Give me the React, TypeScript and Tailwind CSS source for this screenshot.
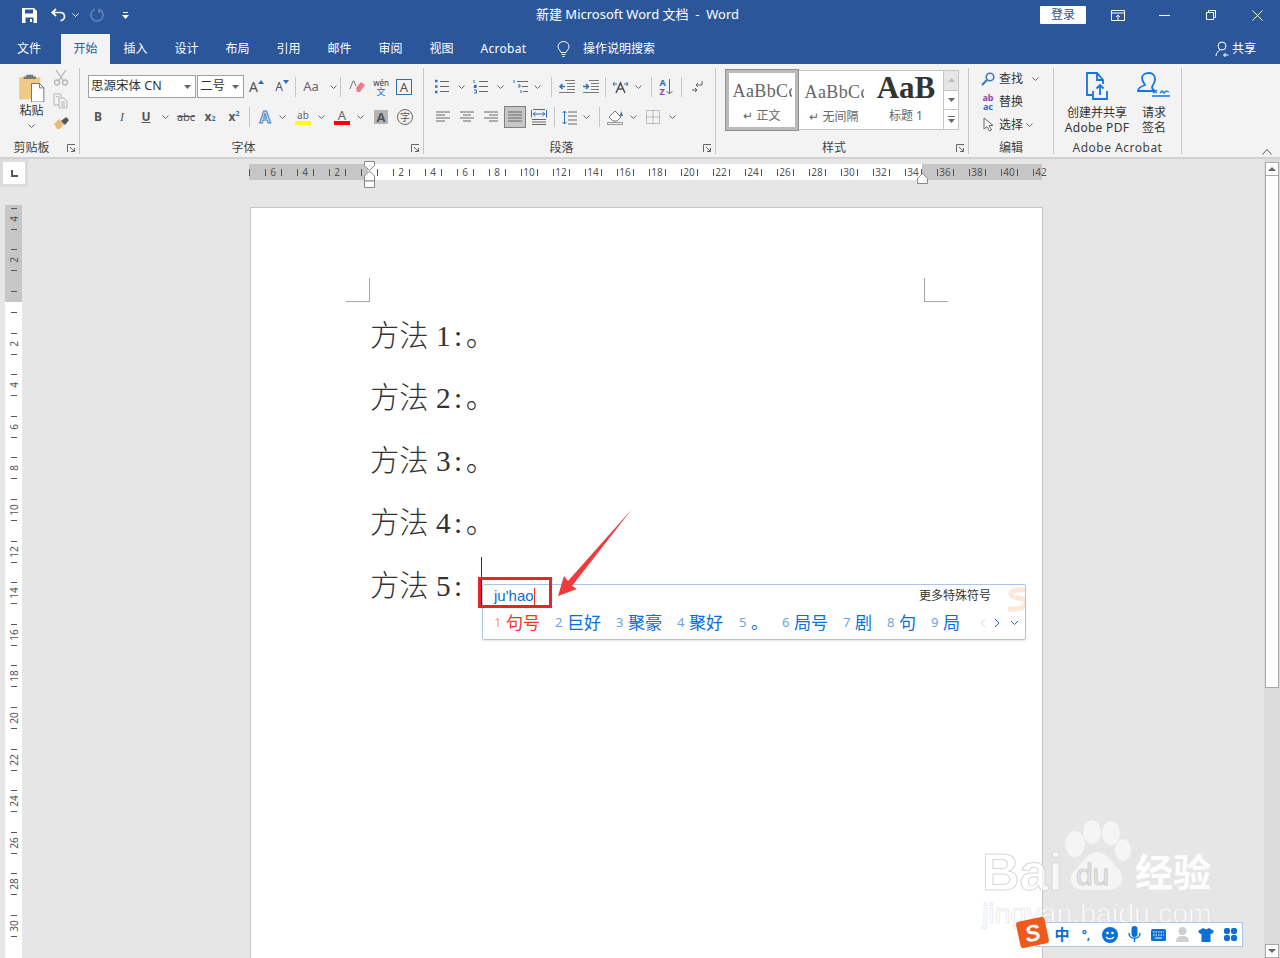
import type { ReactNode } from 'react'

const hRuler = [6, 4, 2, '', 2, 4, 6, 8, 10, 12, 14, 16, 18, 20, 22, 24, 26, 28, 30, 32, 34, 36, 38, 40, 42]
const vRuler = [4, 2, '', 2, 4, 6, 8, 10, 12, 14, 16, 18, 20, 22, 24, 26, 28, 30]
const tabs = ['插入', '设计', '布局', '引用', '邮件', '审阅', '视图']
const docLines = [
  { n: '1:', end: '。' },
  { n: '2:', end: '。' },
  { n: '3:', end: '。' },
  { n: '4:', end: '。' },
  { n: '5:', end: '' },
]
const candidates = [
  { n: '2', t: '巨好', w: 'w-[61px]' },
  { n: '3', t: '聚豪', w: 'w-[61px]' },
  { n: '4', t: '聚好', w: 'w-[62px]' },
  { n: '5', t: '。', w: 'w-[43px]' },
  { n: '6', t: '局号', w: 'w-[61px]' },
  { n: '7', t: '剧', w: 'w-[44px]' },
  { n: '8', t: '句', w: 'w-[44px]' },
  { n: '9', t: '局', w: 'w-[42px]' },
]

function Cell({ className = '', children }: { className?: string; children?: ReactNode }) {
  return <div className={`flex items-center justify-center h-[22px] shrink-0 ${className}`}>{children}</div>
}

function Chev({ className = '' }: { className?: string }) {
  return (
    <svg width="7" height="4" viewBox="0 0 7 4" className={`shrink-0 ${className}`} fill="none" stroke="#666">
      <path d="M.5.5l3 3 3-3" />
    </svg>
  )
}

function ChevCell({ className = '' }: { className?: string }) {
  return <Cell className={className}><Chev /></Cell>
}

function Sep({ className = '' }: { className?: string }) {
  return <div className={`w-px h-[20px] bg-[#c6c6c6] shrink-0 ${className}`} />
}

function Launcher() {
  return (
    <div className="w-[16px] flex justify-center items-center shrink-0">
      <svg width="9" height="9" viewBox="0 0 9 9" fill="none" stroke="#666">
        <path d="M.5 8V.5H8M3 3l4.500 4.500M7.500 4v3.500H4" />
      </svg>
    </div>
  )
}

function Group({ label, launcher, className = '', labelClass = '', children }: { label: string; launcher?: boolean; className?: string; labelClass?: string; children: ReactNode }) {
  return (
    <div className={`h-[86px] border-r border-[#c6c6c6] flex flex-col shrink-0 ${className}`}>
      <div className="flex-1 min-h-0">{children}</div>
      <div className="flex h-[16px] -mb-[2px]">
        <div className={`flex-1 text-center text-[12px] leading-[16px] text-[#444] ${labelClass}`}>{label}</div>
        {launcher && <Launcher />}
      </div>
    </div>
  )
}

function AlignIcon({ d }: { d: string }) {
  return (
    <svg width="16" height="12" viewBox="0 0 16 12" fill="none" stroke="#666">
      <path d={d} />
    </svg>
  )
}

function ListIcon({ kind }: { kind: 'dot' | 'num' | 'multi' }) {
  return (
    <svg width="16" height="15" viewBox="0 0 16 15" fill="none">
      {kind === 'dot' && <path d="M1 2h3M1 7.500h3M1 13h3" stroke="#2f6fb5" strokeWidth="2.500" strokeDasharray="2.500 40" />}
      {kind === 'num' && <path d="M1 1v3M1 6.500h2.500v1H1v1h2.500M1 11h2.500v3H1" stroke="#2f6fb5" />}
      {kind === 'multi' && <path d="M1 1v3M5 6h2v2H5M8 11v3" stroke="#2f6fb5" />}
      {kind === 'multi' ? <path d="M4 2.500h11M9 7.500h6M10 12.500h5" stroke="#666" /> : <path d="M6 2.500h9M6 7.500h9M6 12.500h9" stroke="#666" />}
    </svg>
  )
}

function Clipboard() {
  return (
    <div className="flex">
      <div className="w-[63px] shrink-0 flex flex-col items-center pt-[4px]">
        <svg width="29" height="30" viewBox="0 0 30 34">
          <path d="M1 6h24v25H1z" fill="#f0c987" />
          <path d="M9 3h8v2h3v3H6V5h3z" fill="#777" />
          <path d="M15 13h9l5 5v16H15z" fill="#fff" stroke="#666" />
          <path d="M24 13v5h5" fill="none" stroke="#666" />
        </svg>
        <div className="text-[12px] leading-[16px] mt-px text-[#333]">粘贴</div>
        <Chev className="mt-[5px]" />
      </div>
    </div>
  )
}

function ClipActions() {
  return (
    <div className="flex flex-col items-center w-[16px] -ml-[10px] pt-px gap-[7px]">
      <svg width="16" height="17" viewBox="0 0 16 17" fill="none" stroke="#b5b5b5" strokeWidth="1.300">
        <path d="M3 1l7 10M13 1L6 11" />
        <circle cx="4" cy="13.500" r="2.500" />
        <circle cx="12" cy="13.500" r="2.500" />
      </svg>
      <svg width="16" height="16" viewBox="0 0 16 16" fill="#f3f3f3" stroke="#b5b5b5">
        <path d="M1 1h7v11H1z" />
        <path d="M6 5h5l3 3v7H6zM3 3.500h3M8 9h4M8 11h4M8 13h4" />
      </svg>
      <svg width="17" height="15" viewBox="0 0 17 15">
        <path d="M1 8l5-5 5 5-4 5H4z" fill="#e9bd78" />
        <path d="M8 5l5-4 3 3-4 5z" fill="#555" />
      </svg>
    </div>
  )
}

function FontGroup() {
  return (
    <div className="pt-[7px]">
      <div className="flex items-center h-[23px] pl-[8px]">
        <div className="w-[108px] h-[23px] bg-white border border-[#a0a0a0] flex items-center justify-between px-[2px] text-[12.500px] text-[#333]">
          <span>思源宋体 CN</span>
          <svg width="7" height="4" viewBox="0 0 7 4" className="mr-[2px]"><path d="M0 0h7L3.500 4z" fill="#666" /></svg>
        </div>
        <div className="w-[47px] ml-px h-[23px] bg-white border border-[#a0a0a0] flex items-center justify-between px-[2px] text-[12.500px] text-[#333]">
          <span>二号</span>
          <svg width="7" height="4" viewBox="0 0 7 4" className="mr-[2px]"><path d="M0 0h7L3.500 4z" fill="#666" /></svg>
        </div>
        <Cell className="w-[25px] text-[14px] text-[#555]"><span>A</span><svg width="6" height="4" viewBox="0 0 6 4" className="-mt-[10px]"><path d="M0 4l3-4 3 4z" fill="#2f6fb5" /></svg></Cell>
        <Cell className="w-[26px] text-[12px] text-[#555]"><span>A</span><svg width="6" height="4" viewBox="0 0 6 4" className="-mt-[10px]"><path d="M0 0l3 4 3-4z" fill="#2f6fb5" /></svg></Cell>
        <Sep />
        <Cell className="w-[30px] text-[13px] text-[#666]">Aa</Cell>
        <ChevCell className="w-[14px]" />
        <Sep />
        <Cell className="w-[32px]">
          <svg width="16" height="16" viewBox="0 0 16 16">
            <path d="M7 9l5-6 4 3-5 7H8z" fill="#ee7b8a" />
            <path d="M1 10l3-8h1l2 5" fill="none" stroke="#777" />
          </svg>
        </Cell>
        <Cell className="w-[16px] flex-col leading-[9px]">
          <span className="text-[8px] text-[#333]">wén</span>
          <span className="text-[9px] text-[#2f6fb5]">文</span>
        </Cell>
        <Cell className="w-[30px]">
          <div className="w-[16px] h-[16px] border border-[#2f6fb5] text-[13px] leading-[14px] text-center text-[#555]">A</div>
        </Cell>
      </div>
      <div className="flex items-center h-[22px] mt-[8px] pl-[6px] text-[#555]">
        <Cell className="w-[24px] text-[12px] font-bold">B</Cell>
        <Cell className="w-[24px] text-[12px] italic font-['Liberation_Serif',serif]">I</Cell>
        <Cell className="w-[24px] text-[12px] font-bold underline">U</Cell>
        <ChevCell className="w-[14px]" />
        <Cell className="w-[28px] text-[11px] line-through">abc</Cell>
        <Cell className="w-[20px] text-[12px] font-bold">x<sub className="text-[7px] text-[#2f6fb5]">2</sub></Cell>
        <Cell className="w-[28px] text-[12px] font-bold">x<sup className="text-[7px] text-[#2f6fb5]">2</sup></Cell>
        <Sep className="ml-px" />
        <Cell className="w-[26px] ml-[2px] text-[16px] font-bold text-[#cfe0f3] [-webkit-text-stroke:1px_#4a86c5]">A</Cell>
        <ChevCell className="w-[8px]" />
        <Cell className="w-[30px] ml-[2px]">
          <div className="flex flex-col items-center leading-[10px]">
            <span className="text-[10px] text-[#666]">ab</span>
            <div className="w-[16px] h-[4px] bg-[#ffff00] mt-[1px]" />
          </div>
        </Cell>
        <ChevCell className="w-[6px]" />
        <Cell className="w-[32px] ml-[2px]">
          <div className="flex flex-col items-center leading-[11px]">
            <span className="text-[13px] text-[#666]">A</span>
            <div className="w-[16px] h-[4px] bg-[#ff0000]" />
          </div>
        </Cell>
        <ChevCell className="w-[4px]" />
        <Cell className="w-[30px] ml-[4px]">
          <div className="w-[14px] h-[14px] bg-[#b5b5b5] text-[13px] leading-[14px] text-center font-bold text-[#555]">A</div>
        </Cell>
        <Cell className="w-[18px]">
          <div className="w-[16px] h-[16px] rounded-full border border-[#666] text-[10px] leading-[14px] text-center text-[#555]">字</div>
        </Cell>
      </div>
    </div>
  )
}

function ParagraphGroup() {
  return (
    <div className="pt-[7px]">
      <div className="flex items-center h-[23px] pl-[8px]">
        <Cell className="w-[20px]"><ListIcon kind="dot" /></Cell>
        <ChevCell className="w-[18px]" />
        <Cell className="w-[22px]"><ListIcon kind="num" /></Cell>
        <ChevCell className="w-[16px]" />
        <Cell className="w-[26px]"><ListIcon kind="multi" /></Cell>
        <ChevCell className="w-[6px]" />
        <Sep className="ml-[11px]" />
        <Cell className="w-[28px]">
          <svg width="17" height="13" viewBox="0 0 17 13" fill="none">
            <path d="M7 .5h10M9 3.500h8M9 6.500h8M9 9.500h8M1 12.500h16" stroke="#777" />
            <path d="M7 6.500H2M4.500 4L2 6.500 4.500 9" stroke="#2f6fb5" strokeWidth="1.500" />
          </svg>
        </Cell>
        <Cell className="w-[20px]">
          <svg width="17" height="13" viewBox="0 0 17 13" fill="none">
            <path d="M7 .5h10M9 3.500h8M9 6.500h8M9 9.500h8M1 12.500h16" stroke="#777" />
            <path d="M1 6.500h5M4 4l2.500 2.500L4 9" stroke="#2f6fb5" strokeWidth="1.500" />
          </svg>
        </Cell>
        <Sep className="ml-[5px]" />
        <Cell className="w-[28px]">
          <svg width="17" height="14" viewBox="0 0 17 14" fill="none">
            <path d="M4 13l4.500-10L13 13M6 9h5" stroke="#555" strokeWidth="1.600" />
            <path d="M1 4h4M2.500 2L1 4l1.500 2M12 4h4M14.500 2L16 4l-1.500 2" stroke="#2f6fb5" />
          </svg>
        </Cell>
        <ChevCell className="w-[8px]" />
        <Sep className="ml-[9px]" />
        <Cell className="w-[28px]">
          <div className="flex items-center">
            <div className="flex flex-col text-[9px] leading-[9px] font-bold">
              <span className="text-[#2f6fb5]">A</span>
              <span className="text-[#8e44ad]">Z</span>
            </div>
            <svg width="7" height="16" viewBox="0 0 7 16" fill="none" stroke="#666"><path d="M3.500 0v15M.5 12l3 3 3-3" /></svg>
          </div>
        </Cell>
        <Sep className="ml-px" />
        <Cell className="w-[30px]">
          <svg width="12" height="14" viewBox="0 0 12 14" fill="none" stroke="#666">
            <path d="M11 1v4H5M7 3L5 5l2 2" />
            <path d="M1 10h5M4 8l2 2-2 2" stroke="#555" />
          </svg>
        </Cell>
      </div>
      <div className="flex items-center h-[22px] mt-[8px] pl-[7px]">
        <Cell className="w-[24px]"><AlignIcon d="M1 1h14M1 4h9M1 7h14M1 10h9" /></Cell>
        <Cell className="w-[24px]"><AlignIcon d="M1 1h14M4 4h8M1 7h14M4 10h8" /></Cell>
        <Cell className="w-[24px]"><AlignIcon d="M1 1h14M6 4h9M1 7h14M6 10h9" /></Cell>
        <Cell className="w-[24px]">
          <div className="w-[22px] h-[22px] bg-[#c6c6c6] border border-[#7f7f7f] flex items-center justify-center">
            <AlignIcon d="M1 1h14M1 4h14M1 7h14M1 10h14" />
          </div>
        </Cell>
        <Cell className="w-[24px]">
          <svg width="16" height="16" viewBox="0 0 16 16" fill="none">
            <path d="M2 .5h12M1 10.500h14M1 13h14M1 15.500h14" stroke="#666" />
            <path d="M.5 1v7.500M15.500 1v7.500M2 5h12M4.500 3L2 5l2.500 2M11.500 3L14 5l-2.500 2" stroke="#2f6fb5" />
          </svg>
        </Cell>
        <Sep className="ml-[3px]" />
        <Cell className="w-[28px]">
          <svg width="15" height="15" viewBox="0 0 15 15" fill="none">
            <path d="M6 2h9M6 6h9M6 10h9M6 14h9" stroke="#666" />
            <path d="M2.500 1v13M.5 3l2-2 2 2M.5 12l2 2 2-2" stroke="#2f6fb5" />
          </svg>
        </Cell>
        <ChevCell className="w-[6px]" />
        <Sep className="ml-[10px]" />
        <Cell className="w-[30px]">
          <svg width="17" height="16" viewBox="0 0 17 16" fill="none">
            <path d="M2 8l6-6 6 6-4 4H6z" fill="#fff" stroke="#777" />
            <path d="M14 2l2 5h-3z" fill="#2f6fb5" />
            <path d="M.5 13.500h15v2H.5z" stroke="#999" />
          </svg>
        </Cell>
        <ChevCell className="w-[6px]" />
        <Cell className="w-[30px] ml-[2px]">
          <svg width="14" height="14" viewBox="0 0 14 14" fill="none" stroke="#888" strokeDasharray="1 1">
            <path d="M.5.500h13v13H.5zM7 .5v13M.5 7h13" />
          </svg>
        </Cell>
        <ChevCell className="w-[8px]" />
      </div>
    </div>
  )
}

function StyleItem({ sample, label, selected, big }: { sample: string; label: string; selected?: boolean; big?: boolean }) {
  return (
    <div className={`w-[72px] shrink-0 flex flex-col items-center ${selected ? 'border-[3px] border-[#b9b9b9] outline outline-1 outline-[#8f8f8f] -my-px' : ''}`}>
      {big ? (
        <div className="mt-[5px] font-['Liberation_Serif',serif] whitespace-nowrap text-[31px] font-bold leading-[24px] text-[#333]">{sample}</div>
      ) : (
        <div className={`w-[59px] overflow-hidden font-['Liberation_Serif',serif] whitespace-nowrap text-[18px] leading-[24px] tracking-[0.4px] text-[#666] ${selected ? 'mt-[6px]' : 'mt-[9px]'}`}>{sample}</div>
      )}
      <div className={`text-[12px] text-[#666] ${big ? 'mt-[7px]' : 'mt-[4px]'}`}>{label}</div>
    </div>
  )
}

function StylesGroup() {
  return (
    <div className="pt-[2px] pl-[9px]">
      <div className="w-[234px] h-[60px] bg-white border border-[#c6c6c6] flex">
        <StyleItem sample="AaBbCc" label="↵ 正文" selected />
        <StyleItem sample="AaBbCc" label="↵ 无间隔" />
        <StyleItem sample="AaB" label="标题 1" big />
        <div className="w-[15px] shrink-0 ml-auto border-l border-[#c6c6c6] flex flex-col">
          <div className="flex-1 bg-[#e6e6e6] flex items-center justify-center border-b border-[#c6c6c6]">
            <svg width="7" height="4" viewBox="0 0 7 4"><path d="M0 4l3.500-4L7 4z" fill="#bbb" /></svg>
          </div>
          <div className="flex-1 flex items-center justify-center border-b border-[#c6c6c6]">
            <svg width="7" height="4" viewBox="0 0 7 4"><path d="M0 0l3.500 4L7 0z" fill="#666" /></svg>
          </div>
          <div className="flex-1 flex items-center justify-center">
            <svg width="7" height="7" viewBox="0 0 7 7"><path d="M0 0h7v1H0zM0 3l3.500 4L7 3z" fill="#666" /></svg>
          </div>
        </div>
      </div>
    </div>
  )
}

function EditRow({ icon, label, chev }: { icon: ReactNode; label: string; chev?: string }) {
  return (
    <div className="flex items-center h-[23px] pl-[10px] text-[12px] text-[#333]">
      <div className="w-[18px] flex justify-center shrink-0">{icon}</div>
      <span className="ml-[2px]">{label}</span>
      {chev && <Chev className={chev} />}
    </div>
  )
}

function EditingGroup() {
  return (
    <div className="-mt-px">
      <EditRow
        label="查找"
        chev="ml-[9px]"
        icon={
          <svg width="14" height="14" viewBox="0 0 14 14" fill="none" stroke="#3e78b8" strokeWidth="1.600">
            <circle cx="9" cy="5" r="3.800" />
            <path d="M6 8l-5 5" strokeWidth="2.200" />
          </svg>
        }
      />
      <EditRow
        label="替换"
        icon={
          <div className="text-[9px] leading-[9px] font-bold text-center">
            <div className="text-[#8e44ad]">ab</div>
            <div className="text-[#2f6fb5]">ac</div>
          </div>
        }
      />
      <EditRow
        label="选择"
        chev="ml-[3px]"
        icon={
          <svg width="11" height="15" viewBox="0 0 11 15" fill="#fff" stroke="#666">
            <path d="M1 1v11l3-2.500L6.500 14l2-1L6 8.500h4z" />
          </svg>
        }
      />
    </div>
  )
}

function AcrobatGroup() {
  return (
    <div className="flex pl-[10px] pt-[3px]">
      <div className="w-[66px] flex flex-col items-center shrink-0">
        <svg width="26" height="30" viewBox="0 0 26 30" fill="none" stroke="#1473e6" strokeWidth="1.800">
          <path d="M8 24H3V2h10l6 7v4M13 2v7h6" />
          <path d="M9 20v8h14v-8M16 24V14M12.500 17.500L16 14l3.500 3.500" />
        </svg>
        <div className="text-[12px] leading-[15px] mt-[4px] text-center text-[#333] whitespace-nowrap">创建并共享<br /><span className="tracking-[0.3px]">Adobe PDF</span></div>
      </div>
      <div className="w-[42px] ml-[3px] flex flex-col items-center shrink-0">
        <svg width="34" height="30" viewBox="0 0 34 30" fill="none" stroke="#1473e6" strokeWidth="1.800">
          <path d="M12 2c4 0 6 3 6 6 0 4-2 6-3 8 0 2 1 3 3 4H1c0-3 4-5 7-6-1-2-3-4-3-7 0-3 3-5 7-5z" />
          <path d="M15 25h18M16 19l4 3M20 19l-4 3M23 22l2-2 2 2 2-2 3 1" strokeWidth="1.300" />
        </svg>
        <div className="text-[12px] leading-[15px] mt-[4px] text-center text-[#333]">请求<br />签名</div>
      </div>
    </div>
  )
}

function TitleBar() {
  return (
    <div className="h-[30px] flex items-center text-white relative shrink-0">
      <div className="flex items-center pl-[22px]">
        <svg width="15" height="15" viewBox="0 0 15 15" className="shrink-0">
          <path d="M0 0h12l3 3v12H0z" fill="#fff" />
          <path d="M3 1.500h8v4H3zM3.500 9.500h8V15h-8z" fill="#2b579a" />
          <path d="M8 11h2v3H8z" fill="#fff" />
        </svg>
        <svg width="15" height="14" viewBox="0 0 15 14" fill="none" stroke="#fff" strokeWidth="1.700" className="ml-[14px] shrink-0">
          <path d="M5 1L1.200 4.500 5 8M1.500 4.500H9c3 0 4.500 2 4.500 4s-1.500 4-4 4" />
        </svg>
        <Chev className="ml-[6px] [&>path]:stroke-white" />
        <svg width="14" height="14" viewBox="0 0 14 14" fill="none" stroke="#5f82b8" strokeWidth="1.700" className="ml-[11px] shrink-0">
          <path d="M9 1.500c3 1 4 3.500 4 5.500a6 6 0 1 1-8-5.700M9 .8V5" />
        </svg>
        <svg width="7" height="7" viewBox="0 0 7 7" className="ml-[18px] shrink-0"><path d="M1 0h5v1H1zM0 3h7L3.500 7z" fill="#fff" /></svg>
      </div>
      <div className="flex-1 text-center text-[13px] whitespace-pre pl-[106px]">新建 Microsoft Word 文档  -  Word</div>
      <div className="flex items-center">
        <div className="w-[46px] h-[18px] bg-white rounded-[1px] text-center text-[12px] leading-[18px] text-[#2b579a]">登录</div>
        <div className="w-[46px] flex justify-center ml-[9px]">
          <svg width="14" height="11" viewBox="0 0 14 11" fill="none" stroke="#fff"><path d="M.5.500h13v10H.5zM.5 3h13M5 7l2-2 2 2M7 5v5" /></svg>
        </div>
        <div className="w-[47px] flex justify-center">
          <svg width="11" height="1" viewBox="0 0 11 1"><path d="M0 0h11v1H0z" fill="#fff" /></svg>
        </div>
        <div className="w-[46px] flex justify-center">
          <svg width="10" height="10" viewBox="0 0 10 10" fill="none" stroke="#fff"><path d="M.5 2.500h7v7h-7zM2.500 2.500v-2h7v7h-2" /></svg>
        </div>
        <div className="w-[46px] flex justify-center">
          <svg width="11" height="11" viewBox="0 0 11 11" fill="none" stroke="#fff"><path d="M.5.500l10 10M10.500.5l-10 10" /></svg>
        </div>
      </div>
    </div>
  )
}

function TabRow() {
  return (
    <div className="h-[34px] flex items-end text-[12px] text-white shrink-0 pl-[4px]">
      <div className="w-[50px] h-[30px] leading-[30px] text-center">文件</div>
      <div className="w-[49px] ml-[7px] h-[30px] leading-[30px] text-center bg-[#f3f3f3] text-[#2b579a]">开始</div>
      {tabs.map((t, i) => (
        <div key={i} className="w-[51px] h-[30px] leading-[30px] text-center first:ml-px">{t}</div>
      ))}
      <div className="w-[73px] h-[30px] leading-[30px] text-center tracking-[0.3px]">Acrobat</div>
      <div className="h-[30px] flex items-center ml-[17px]">
        <svg width="13" height="16" viewBox="0 0 13 16" fill="none" stroke="#fff">
          <path d="M4 11.500C3.500 9.500 1 8.500 1 5.500a5.500 5 0 0 1 11 0c0 3-2.500 4-3 6zM4.500 13.500h4M5.500 15.500h2" />
        </svg>
        <span className="ml-[13px]">操作说明搜索</span>
      </div>
      <div className="h-[30px] flex items-center ml-auto pr-[24px]">
        <svg width="15" height="16" viewBox="0 0 15 16" fill="none" stroke="#fff">
          <circle cx="7" cy="5" r="4" />
          <path d="M1 15c0-3 2-5 4-6M10 12v4M8 14h5.500" />
        </svg>
        <span className="ml-[2px]">共享</span>
      </div>
    </div>
  )
}

function Ribbon() {
  return (
    <div className="h-[95px] bg-[#f3f3f3] border-b-2 border-[#d2d2d2] pt-[4px] flex shrink-0 relative">
      <Group label="剪贴板" launcher className="w-[80px]">
        <div className="flex">
          <Clipboard />
          <ClipActions />
        </div>
      </Group>
      <Group label="字体" launcher className="w-[344px]"><FontGroup /></Group>
      <Group label="段落" launcher className="w-[292px]"><ParagraphGroup /></Group>
      <Group label="样式" launcher className="w-[253px]"><StylesGroup /></Group>
      <Group label="编辑" className="w-[85px]"><EditingGroup /></Group>
      <Group label="Adobe Acrobat" labelClass="tracking-[0.5px]" className="w-[128px]"><AcrobatGroup /></Group>
      <div className="flex-1 flex items-end justify-end pr-[8px] pb-[2px]">
        <svg width="10" height="6" viewBox="0 0 10 6" fill="none" stroke="#555"><path d="M.5 5.500l4.500-5 4.500 5" /></svg>
      </div>
    </div>
  )
}

function HorizontalRuler() {
  return (
    <div className="relative h-[16px] w-[793px] mt-[5px]">
      <div className="absolute inset-0 flex bg-[linear-gradient(to_right,#c6c6c6_119px,#fff_119px,#fff_673px,#c6c6c6_673px)]">
        <div className="w-[8px] shrink-0 flex items-center"><div className="w-px h-[7px] bg-[#555]" /></div>
        {hRuler.map((n, i) => (
          <div key={i} className="w-[32px] shrink-0 flex items-center justify-center">
            <div className="w-px h-[7px] bg-[#555]" />
            <div className="w-[15px] text-center text-[10px] leading-[16px] text-[#555]">{n}</div>
            <div className={`w-px h-[7px] ${i === hRuler.length - 1 ? '' : 'bg-[#555]'}`} />
          </div>
        ))}
      </div>
      <svg width="12" height="28" viewBox="0 0 12 28" className="absolute left-[115px] -top-[3px]" fill="#fff" stroke="#888">
        <path d="M.5.500h10v4L5.500 9.500.5 4.500z" />
        <path d="M5.500 10l5 5v5H.5v-5z" />
        <path d="M.5 20h10v6.500H.5z" />
      </svg>
      <svg width="12" height="11" viewBox="0 0 12 11" className="absolute left-[668px] top-[9px]" fill="#fff" stroke="#888">
        <path d="M5.500.5l5 5v5H.5v-5z" />
      </svg>
    </div>
  )
}

function VerticalRuler() {
  return (
    <div className="w-[17px] ml-[5px] mt-[18px] h-[753px] overflow-hidden bg-[linear-gradient(to_bottom,#c6c6c6_97px,#fff_97px)]">
      <div className="-mt-[7px]">
        {vRuler.map((n, i) => (
          <div key={i} className="h-[41.600px] flex flex-col items-center justify-center">
            <div className="h-px w-[6px] bg-[#555]" />
            <div className="h-[20px] flex items-center justify-center text-[10px] text-[#555] -rotate-90">{n}</div>
            <div className="h-px w-[6px] bg-[#555]" />
          </div>
        ))}
      </div>
    </div>
  )
}

function Page() {
  return (
    <div className="ml-px mt-[27px] w-[793px] flex-1 bg-white border border-b-0 border-[#c6c6c6] pt-[70px]">
      <div className="flex justify-between ml-[95px] w-[602px]">
        <div className="w-[24px] h-[24px] border-r border-b border-[#a8a8a8]" />
        <div className="w-[24px] h-[24px] border-l border-b border-[#a8a8a8]" />
      </div>
      <div className="ml-[119px] mt-[3px] font-['Liberation_Serif','Noto_Sans_CJK_SC',serif] font-light text-[29.300px] text-[#333]">
        {docLines.map(l => (
          <div key={l.n} className="h-[62.400px] leading-[62.400px] whitespace-pre">
            方法 <span className="tracking-[3.500px]">{l.n}</span>{l.end}
          </div>
        ))}
      </div>
    </div>
  )
}

function Scrollbar() {
  return (
    <div className="w-[16px] ml-auto bg-[#dcdcdc] flex flex-col items-center pt-[3px]">
      <div className="w-[14px] h-[14px] bg-white border border-[#a8a8a8] flex items-center justify-center">
        <svg width="8" height="4" viewBox="0 0 8 4"><path d="M0 4l4-4 4 4z" fill="#666" /></svg>
      </div>
      <div className="w-[14px] h-[512px] bg-white border border-[#a8a8a8] border-t-0" />
      <div className="w-[14px] h-[14px] mt-auto bg-white border border-[#a8a8a8] flex items-center justify-center">
        <svg width="8" height="4" viewBox="0 0 8 4"><path d="M0 0l4 4 4-4z" fill="#666" /></svg>
      </div>
    </div>
  )
}

function ImePopup() {
  return (
    <>
      <div className="absolute left-[481px] top-[557px] w-px h-[51px] bg-[#333]" />
      <div className="absolute left-[482px] top-[584px] w-[544px] h-[56px] bg-white border border-[#a9c6e8] rounded-[2px] shadow-[0_1px_2px_rgba(0,0,0,0.1)] overflow-hidden">
        <svg width="30" height="26" viewBox="0 0 30 26" className="absolute right-0 top-[2px]" fill="none" stroke="#fde6da" strokeWidth="5">
          <path d="M30 3c-8-1-15 1-14 5s14 2 15 7-8 8-18 7" />
        </svg>
        <div className="relative flex items-center h-[22px] pl-[11px] pr-[34px]">
          <span className="text-[15px] text-[#0a6fd8] font-['Liberation_Sans',sans-serif]">ju'hao</span>
          <div className="w-px h-[17px] bg-[#f0301c]" />
          <span className="ml-auto text-[12px] text-[#333]">更多特殊符号</span>
        </div>
        <div className="flex items-center h-[32px] pl-[11px]">
          <div className="w-[61px] flex items-center text-[#f5352a] shrink-0">
            <span className="text-[13px] w-[12px] text-[#f59a80]">1</span>
            <span className="text-[17px]">句号</span>
          </div>
          {candidates.map(c => (
            <div key={c.n} className={`flex items-center shrink-0 ${c.w}`}>
              <span className="text-[13px] w-[12px] text-[#6da3e6]">{c.n}</span>
              <span className="text-[17px] text-[#0a6fd8]">{c.t}</span>
            </div>
          ))}
          <div className="flex items-center ml-[7px] gap-[8px]">
            <svg width="6" height="10" viewBox="0 0 6 10" fill="none" stroke="#c9dcf3"><path d="M5 1L1 5l4 4" /></svg>
            <svg width="6" height="10" viewBox="0 0 6 10" fill="none" stroke="#1d6fd1"><path d="M1 1l4 4-4 4" /></svg>
            <svg width="9" height="6" viewBox="0 0 9 6" fill="none" stroke="#1d6fd1" className="ml-[2px]"><path d="M1 1l3.500 3.500L8 1" /></svg>
          </div>
        </div>
      </div>
    </>
  )
}

function Annotation() {
  return (
    <>
      <div className="absolute left-[478px] top-[577px] w-[74px] h-[31px] border-[3px] border-[#e8242a]" />
      <svg width="90" height="100" viewBox="0 0 90 100" className="absolute left-[550px] top-[505px]">
        <path d="M82 4L22 81l5 3L8 91l6-20 4 5z" fill="#f23a3c" />
      </svg>
    </>
  )
}

function Watermark() {
  return (
    <div className="absolute left-[982px] top-[820px] w-[240px] h-[112px] pointer-events-none">
      <div className="flex items-start">
        <div className="mt-[26px] text-[52px] leading-[52px] font-bold font-['Liberation_Sans',sans-serif] text-white/70 [-webkit-text-stroke:1px_#d8d8d8]">Bai</div>
        <div className="relative -ml-[2px] shrink-0">
          <svg width="72" height="76" viewBox="0 0 72 76" fill="#f6f6f6" fillOpacity="0.9">
            <ellipse cx="14" cy="24" rx="10" ry="13" />
            <ellipse cx="31" cy="12" rx="9" ry="12" />
            <ellipse cx="50" cy="13" rx="9" ry="12" />
            <ellipse cx="62" cy="30" rx="8" ry="11" />
            <path d="M36 32c10 0 14 10 22 18 6 7 3 20-10 20H22C10 70 6 58 14 50c8-7 11-18 22-18z" />
          </svg>
          <span className="absolute left-[15px] top-[40px] text-[30px] leading-[30px] font-['Liberation_Sans',sans-serif] text-[#e4e4e4] [-webkit-text-stroke:1px_#cfcfcf]">du</span>
        </div>
        <div className="mt-[29px] ml-[2px] text-[38px] leading-[44px] font-bold text-white/90 whitespace-nowrap">经验</div>
      </div>
      <div className="-mt-[3px] text-[28.500px] leading-[36px] text-white/80 [-webkit-text-stroke:0.5px_#dcdcdc] font-['Liberation_Sans',sans-serif] whitespace-nowrap">jingyan.baidu.com</div>
    </div>
  )
}

function SogouBar() {
  return (
    <div className="absolute left-[1018px] top-[918px] flex items-center">
      <div className="w-[29px] h-[27px] bg-[#ee5a1e] rounded-[3px] -rotate-12 flex items-center justify-center z-10 text-white text-[23px] leading-[26px] font-bold italic font-['Liberation_Sans',sans-serif]">S</div>
      <div className="w-[208px] h-[25px] -ml-[12px] mt-[4px] bg-white border border-[#a8c8ea] flex items-center pl-[14px] text-[#0a6fd8]">
        <div className="w-[24px] text-center text-[15px] font-bold leading-none">中</div>
        <div className="w-[24px] text-center text-[12px] font-bold leading-none">°,</div>
        <div className="w-[24px] flex justify-center">
          <svg width="16" height="16" viewBox="0 0 16 16"><circle cx="8" cy="8" r="8" fill="#0a6fd8" /><circle cx="5.500" cy="6" r="1.300" fill="#fff" /><circle cx="10.500" cy="6" r="1.300" fill="#fff" /><path d="M4 10c2 2.500 6 2.500 8 0" fill="none" stroke="#fff" strokeWidth="1.300" /></svg>
        </div>
        <div className="w-[24px] flex justify-center">
          <svg width="13" height="17" viewBox="0 0 13 17" fill="none"><rect x="3.500" width="6" height="11" rx="3" fill="#0a6fd8" /><path d="M1 7c0 7 11 7 11 0M6.500 12v4" stroke="#0a6fd8" strokeWidth="1.400" /></svg>
        </div>
        <div className="w-[24px] flex justify-center">
          <svg width="15" height="12" viewBox="0 0 15 12"><rect width="15" height="12" rx="1.500" fill="#0a6fd8" /><path d="M2 3h11M2 6h11" stroke="#fff" strokeDasharray="1.500 1" /><path d="M4 9h7" stroke="#fff" /></svg>
        </div>
        <div className="w-[24px] flex justify-center">
          <svg width="13" height="15" viewBox="0 0 13 15" fill="#cfcfcf"><circle cx="6.500" cy="4" r="4" /><path d="M0 15c0-5 3-6 6.500-6s6.500 1 6.500 6z" /></svg>
        </div>
        <div className="w-[24px] flex justify-center">
          <svg width="16" height="14" viewBox="0 0 16 14" fill="#0a6fd8"><path d="M5 0l3 1.500L11 0l5 3-2 3-1.500-.5V14h-9V5.500L2 6 0 3z" /></svg>
        </div>
        <div className="w-[24px] flex justify-center">
          <svg width="13" height="13" viewBox="0 0 13 13" fill="#0a6fd8"><rect width="6" height="6" rx="2" /><rect x="7" width="6" height="6" rx="2" /><rect y="7" width="6" height="6" rx="2" /><rect x="7" y="7" width="6" height="6" rx="2" /></svg>
        </div>
      </div>
    </div>
  )
}

export default function App() {
  return (
    <div className="relative w-[1280px] h-[958px] overflow-hidden flex flex-col bg-[#e6e6e6] font-['Noto_Sans','Noto_Sans_CJK_SC',sans-serif]">
      {/* Title and tabs */}
      <div className="bg-[#2b579a] flex flex-col shrink-0">
        <TitleBar />
        <TabRow />
      </div>
      <Ribbon />

      {/* Work area */}
      <div className="flex-1 min-h-0 flex">
        <div className="w-[249px] shrink-0">
          <div className="w-[28px] h-[28px] bg-[#dcdcdc] p-[3px]">
            <div className="w-[22px] h-[22px] bg-white flex items-center justify-center">
              <svg width="7" height="7" viewBox="0 0 7 7"><path d="M0 0h2v5h5v2H0z" fill="#555" /></svg>
            </div>
          </div>
          <VerticalRuler />
        </div>
        <div className="flex flex-col w-[794px] shrink-0">
          <HorizontalRuler />
          <Page />
        </div>
        <Scrollbar />
      </div>

      <ImePopup />
      <Annotation />
      <Watermark />
      <SogouBar />
    </div>
  )
}
